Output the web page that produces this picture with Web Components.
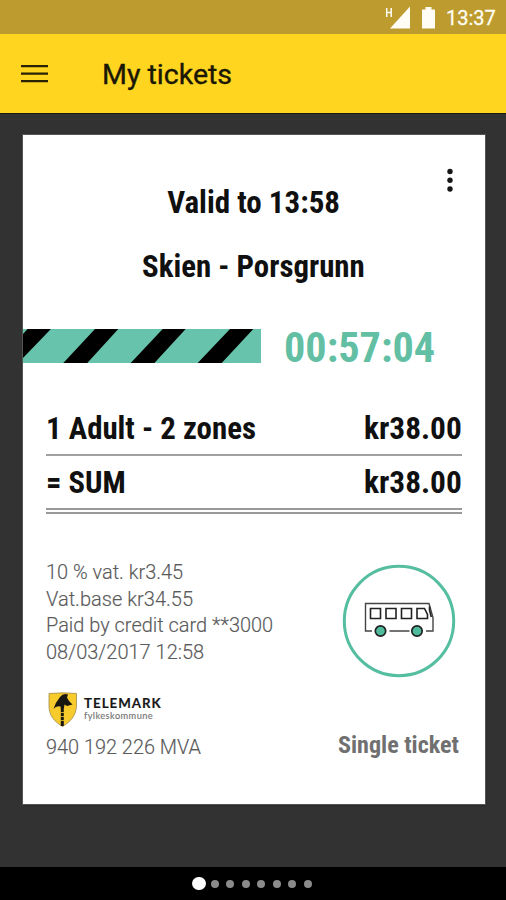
<!DOCTYPE html>
<html lang="en">
<head>
<meta charset="utf-8">
<title>My tickets</title>
<style>
html,body{margin:0;height:900px;overflow:hidden;background:#323232}
</style>
</head>
<body>
<ticket-app></ticket-app>
<script>
// Single line of text whose glyphs are stretched to an exact advance width.
class FitText extends HTMLElement{
  connectedCallback(){
    const r=this.attachShadow({mode:'open'});
    r.innerHTML=`<style>
      :host{display:block;white-space:nowrap;flex:none}
      :host([condensed]){font-family:"Roboto Condensed",Roboto,sans-serif;font-stretch:75%}
      span{display:inline-block;transform-origin:0 50%}
    </style><span><slot></slot></span>`;
    const w=+this.getAttribute('width'), s=r.querySelector('span');
    this.style.width=w+'px';
    s.style.transform=`scaleX(${w/s.offsetWidth})`;
  }
}
class StatusBar extends HTMLElement{
  connectedCallback(){
    this.attachShadow({mode:'open'}).innerHTML=`<style>
      :host{display:flex;height:34px;box-sizing:border-box;background:#bd9b2e;justify-content:flex-end;align-items:center;padding:2px 10px 0 0;color:#fffdf2}
      svg{display:block;margin:0 7px 2px 0}
      fit-text{font:400 20px/32px Roboto,sans-serif;-webkit-text-stroke:.3px}
    </style>
    <svg width="54" height="24" viewBox="0 0 54 24" fill="#fffdf5">
      <path d="M1.700 3v9M6.200 3v9M1.700 7.500h4.500" stroke="#fffdf5" stroke-width="1.500" fill="none"/>
      <path d="M25 1.500v22H5z"/>
      <path d="M37 4.500h3.500v-2.500h6v2.500h3.500v19H37z"/>
    </svg><fit-text width="50">13:37</fit-text>`;
  }
}
class AppBar extends HTMLElement{
  connectedCallback(){
    this.attachShadow({mode:'open'}).innerHTML=`<style>
      :host{display:flex;height:80px;box-sizing:border-box;background:#ffd520;align-items:center;padding-left:21px;color:#1a1705;border-bottom:1px solid #1c1a12}
      svg{margin:0 53.500px 0 0}
      fit-text{font:400 27px/40px Roboto,sans-serif;margin-top:3px;-webkit-text-stroke:.35px}
    </style>
    <svg width="27" height="20" viewBox="0 0 27 20"><path d="M0 2.200h27M0 9.700h27M0 17.200h27" stroke="#292205" stroke-width="2.300"/></svg>
    <fit-text width="130">My tickets</fit-text>`;
  }
}
class PriceRow extends HTMLElement{
  connectedCallback(){
    this.attachShadow({mode:'open'}).innerHTML=`<style>
      :host{display:flex;justify-content:space-between;height:53px;box-sizing:border-box;border-bottom:2px solid #a0a0a0;font-size:31px;line-height:52px;font-weight:700}
      :host([total]){height:58px;border-bottom:6px double #999;line-height:54px}
    </style><slot></slot>`;
  }
}
class TimeStrip extends HTMLElement{
  connectedCallback(){
    this.attachShadow({mode:'open'}).innerHTML=`<style>
      :host{display:flex;height:34px;align-items:center;gap:23px;color:#63bfa4}
      svg{display:block}
      fit-text{font-size:42.500px;line-height:44px;font-weight:700;margin-top:4px}
    </style>
    <svg width="238" height="34" viewBox="0 0 238 34"><path fill="#67c3ab" d="M0 0h238v34H0z"/>
      <path d="M4.600 0h23.300L0 29V5zM72 0h23.300L64.300 34h-24zM139.700 0h23L131.400 34h-23.700zM207 0h23.300L198.700 34h-24z"/></svg>
    <fit-text condensed width="151">00:57:04</fit-text>`;
  }
}
class BusBadge extends HTMLElement{
  connectedCallback(){
    this.attachShadow({mode:'open'}).innerHTML=`<style>:host{display:block;width:114px;height:114px}svg{display:block}</style>
    <svg width="114" height="114" viewBox="0 0 114 114" fill="none">
      <circle cx="57" cy="57" r="54.700" stroke="#55bda0" stroke-width="3"/>
      <g stroke="#444" stroke-width="1.400">
        <path d="M30 67H23.500V39.500H87L91 53.500V67H84M47.500 67H67.500"/>
        <path stroke="#222" stroke-width="1.600" d="M28.500 44.500h10v10h-10zM44 44.500h10v10H44zM59.500 44.500h10v10h-10zM75 44.500h7.500l3 6v4H75zM87.500 42.500v3.500l1.800 7"/>
      </g>
      <g fill="#4fbb9c" stroke="#222" stroke-width="1.700"><circle cx="38.500" cy="67" r="5.200"/><circle cx="75" cy="67" r="5.200"/></g>
    </svg>`;
  }
}
class CountyLogo extends HTMLElement{
  connectedCallback(){
    this.attachShadow({mode:'open'}).innerHTML=`<style>
      :host{display:flex;height:36px;gap:6px}
      svg{display:block}
      div{padding-top:4px}
      .a{font:700 13.500px/15px Lato,sans-serif;color:#171717;letter-spacing:1px}
      .b{font:400 9px/9px Lato,sans-serif;color:#777;letter-spacing:.4px}
    </style>
    <svg width="30" height="36" viewBox="0 0 30 36">
      <path d="M1 1.500Q15 .2 28.500 1.500V14C28 24 22 30 14.500 34.500 7 30 1 24 1 14z" fill="#f8cb2d" stroke="#a08a4b" stroke-width=".8"/>
      <path d="M12 5Q15 1 20 2.500L19 5.500 21 9 24.500 12.500 19 14 16.500 12.500 15.800 17V34h-3V17L12.500 14.500Q8 13.500 5.500 17 7 11 12 5z" fill="#191711"/>
      <path d="M12.500 20.500h3.600M12.500 24.500h3.600M12.500 28.500h3.600" stroke="#f8cb2d" stroke-width=".8"/>
    </svg>
    <div><fit-text class="a" width="78">TELEMARK</fit-text><fit-text class="b" width="69">fylkeskommune</fit-text></div>`;
  }
}
class TicketCard extends HTMLElement{
  connectedCallback(){
    this.attachShadow({mode:'open'}).innerHTML=`<style>
      :host{display:flex;flex-direction:column;box-sizing:border-box;width:461.500px;height:669px;margin:21px 0 0 23px;background:#fff;color:#101010;box-shadow:0 0 0 1px #555,0 1px 2px #0008}
      .menu{align-self:flex-end;margin:33px 30.500px 0 0;height:25px}
      header{display:flex;flex-direction:column;align-items:center;font-size:31px;line-height:40px;font-weight:700;margin:-10px 0 42px}
      header fit-text+fit-text{margin-top:24px}
      .rows{margin:40px 23px 0;height:113px}
      footer{display:flex;justify-content:space-between;margin:44px 24px 0 22.500px}
      .left{font:300 19.500px/26.700px Roboto,sans-serif;color:#5a5a5a;-webkit-text-stroke:.15px}
      .right{display:flex;flex-direction:column;align-items:flex-end}
      .right bus-badge{margin:4px 5px 0 0}
      .kind{font-size:24.500px;line-height:30px;font-weight:700;color:#707070;margin:51.500px 1.500px 0 0}
      county-logo{margin:25px 0 7px 2px}
    </style>
    <svg class="menu" width="8" height="25" viewBox="0 0 8 25"><g fill="#151515"><circle cx="4" cy="3.500" r="2.700"/><circle cx="4" cy="12.300" r="2.700"/><circle cx="4" cy="21" r="2.700"/></g></svg>
    <header><fit-text condensed width="173">Valid to 13:58</fit-text><fit-text condensed width="223">Skien - Porsgrunn</fit-text></header>
    <time-strip></time-strip>
    <div class="rows">
      <price-row><fit-text condensed width="210">1 Adult - 2 zones</fit-text><fit-text condensed width="98">kr38.00</fit-text></price-row>
      <price-row total><fit-text condensed width="80">= SUM</fit-text><fit-text condensed width="98">kr38.00</fit-text></price-row>
    </div>
    <footer>
      <div class="left">
        <fit-text width="137">10 % vat. kr3.45</fit-text>
        <fit-text width="147">Vat.base kr34.55</fit-text>
        <fit-text width="227">Paid by credit card **3000</fit-text>
        <fit-text width="158">08/03/2017 12:58</fit-text>
        <county-logo></county-logo>
        <fit-text width="155">940 192 226 MVA</fit-text>
      </div>
      <div class="right"><bus-badge></bus-badge><fit-text class="kind" condensed width="121">Single ticket</fit-text></div>
    </footer>`;
  }
}
class PageDots extends HTMLElement{
  connectedCallback(){
    this.attachShadow({mode:'open'}).innerHTML=`<style>
      :host{display:flex;height:33px;box-sizing:border-box;padding-right:2px;background:#000;align-items:center;justify-content:center;gap:7.500px}
      i{width:8px;height:8px;border-radius:50%;background:#8b8b8b}
      i:first-of-type{width:13.500px;height:13.500px;background:#fff;margin-right:-2.500px}
    </style>${'<i></i>'.repeat(8)}`;
  }
}
class TicketApp extends HTMLElement{
  connectedCallback(){
    this.attachShadow({mode:'open'}).innerHTML=`<style>
      :host{display:flex;flex-direction:column;width:506px;height:900px;background:#323232;font-family:Roboto,sans-serif}
      page-dots{margin-top:auto}
    </style><status-bar></status-bar><app-bar></app-bar><ticket-card></ticket-card><page-dots></page-dots>`;
  }
}
for(const [n,c] of [['fit-text',FitText],['status-bar',StatusBar],['app-bar',AppBar],['price-row',PriceRow],['time-strip',TimeStrip],['bus-badge',BusBadge],['county-logo',CountyLogo],['ticket-card',TicketCard],['page-dots',PageDots],['ticket-app',TicketApp]]) customElements.define(n,c);
</script>
</body>
</html>
